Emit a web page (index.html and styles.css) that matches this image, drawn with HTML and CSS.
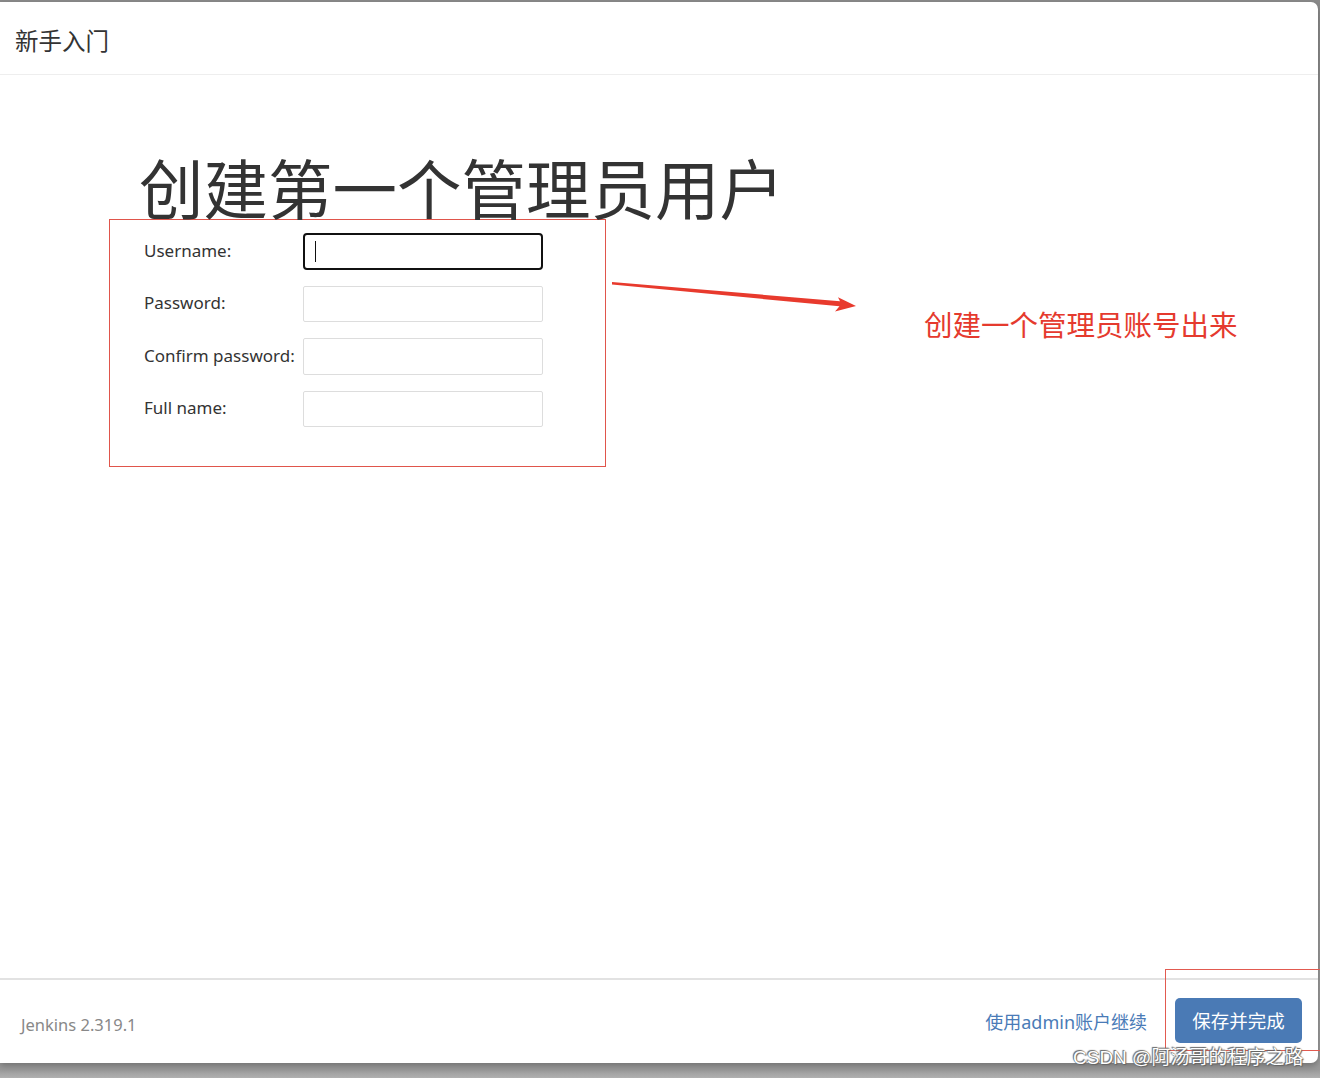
FILE: index.html
```html
<!DOCTYPE html>
<html lang="zh">
<head>
<meta charset="utf-8">
<title>新手入门</title>
<link rel="stylesheet" href="styles.css">
</head>
<body>
<div class="dialog">
  <header class="dlg-header">新手入门</header>
  <main class="dlg-body">
    <h1 class="title">创建第一个管理员用户</h1>
    <form class="form-box">
      <div class="row"><label class="lbl">Username:</label><div class="input focused"><span class="caret"></span></div></div>
      <div class="row"><label class="lbl">Password:</label><div class="input"></div></div>
      <div class="row"><label class="lbl">Confirm password:</label><div class="input"></div></div>
      <div class="row"><label class="lbl">Full name:</label><div class="input"></div></div>
    </form>
  </main>
  <footer class="dlg-footer">
    <span class="version">Jenkins 2.319.1</span>
    <div class="actions">
      <a class="link">使用admin账户继续</a>
      <button class="btn" type="button">保存并完成</button>
    </div>
  </footer>
</div>
<svg class="arrow" width="1320" height="400" viewBox="0 0 1320 400">
  <polygon points="612,282 840,301.3 838,297.3 856,306 835,311.5 839.5,306.3 612,284.6" fill="#e83a2d"/>
</svg>
<div class="note">创建一个管理员账号出来</div>
<div class="btn-mark"></div>
<div class="watermark">CSDN @阿汤哥的程序之路</div>
</body>
</html>
```
FILE: styles.css
```css
html, body {
  margin: 0;
  padding: 0;
}
body {
  width: 1320px;
  height: 1078px;
  background: linear-gradient(#8a8a8a 0px, #9a9a9a 1070px, #b0b0b0 1078px);
  font-family: "Noto Sans", "Noto Sans CJK SC", sans-serif;
  color: #333;
  position: relative;
  overflow: hidden;
}
.dialog {
  margin-top: 2px;
  width: 1318px;
  height: 1061px;
  background: #fff;
  border-radius: 0 7px 7px 0;
  display: flex;
  flex-direction: column;
  box-shadow: 0 3px 6px rgba(0,0,0,0.25);
}
.dlg-header {
  height: 68px;
  padding: 4px 0 0 15px;
  border-bottom: 1px solid #eee;
  display: flex;
  align-items: center;
  font-size: 23.5px;
  font-family: "Noto Sans CJK SC", sans-serif;
  color: #333;
}
.dlg-body {
  flex: 1;
  padding: 79px 0 0 109px;
}
.title {
  margin: 0 0 1px 30px;
  font-size: 64.5px;
  line-height: 64px;
  font-weight: normal;
  font-family: "Noto Sans CJK SC", sans-serif;
  color: #333;
}
.form-box {
  border: 1px solid #e0554b;
  padding: 13px 0 0 34px;
  width: 461px;
  height: 233px;
  display: flex;
  flex-direction: column;
  gap: 16px;
}
.row {
  display: flex;
  align-items: center;
}
.lbl {
  width: 159px;
  font-size: 17px;
  color: #333;
  padding-bottom: 2px;
}
.input {
  width: 240px;
  height: 36.5px;
  box-sizing: border-box;
  border: 1px solid #ddd;
  border-radius: 2px;
  position: relative;
}
.input.focused {
  border: 2px solid #111;
  border-radius: 4px;
}
.caret {
  position: absolute;
  left: 10px;
  top: 6px;
  width: 1px;
  height: 21px;
  background: #111;
}
.dlg-footer {
  height: 83px;
  border-top: 2px solid #e2e2e2;
  display: flex;
  align-items: center;
  justify-content: space-between;
  padding: 0 16px 0 21px;
}
.version {
  font-size: 16.5px;
  color: #888;
  padding-top: 6px;
}
.actions {
  display: flex;
  align-items: center;
  gap: 28px;
}
.link {
  font-size: 18px;
  color: #4a7bb7;
  font-family: "Noto Sans", "Noto Sans CJK SC", sans-serif;
  padding-bottom: 2px;
}
.btn {
  width: 127px;
  height: 45px;
  background: #4a7ab5;
  border: none;
  border-radius: 5px;
  color: #fff;
  font-size: 18.5px;
  font-family: "Noto Sans CJK SC", sans-serif;
  padding: 0;
  margin-top: -3px;
}
.arrow {
  position: absolute;
  left: 0;
  top: 0;
}
.note {
  position: absolute;
  left: 924px;
  top: 304px;
  font-size: 28.5px;
  line-height: 40px;
  color: #e53a2e;
  font-family: "Noto Sans CJK SC", sans-serif;
}
.btn-mark {
  position: absolute;
  left: 1165px;
  top: 969px;
  width: 170px;
  height: 80px;
  border: 1px solid #e25a50;
}
.watermark {
  position: absolute;
  left: 1073px;
  top: 1045px;
  font-size: 19px;
  line-height: 26px;
  font-family: "Liberation Sans", "Noto Sans CJK SC", sans-serif;
  color: #fff;
  text-shadow: 0 0 1px #555, 1px 1px 1px #666, -1px -1px 1px #666;
}
```
